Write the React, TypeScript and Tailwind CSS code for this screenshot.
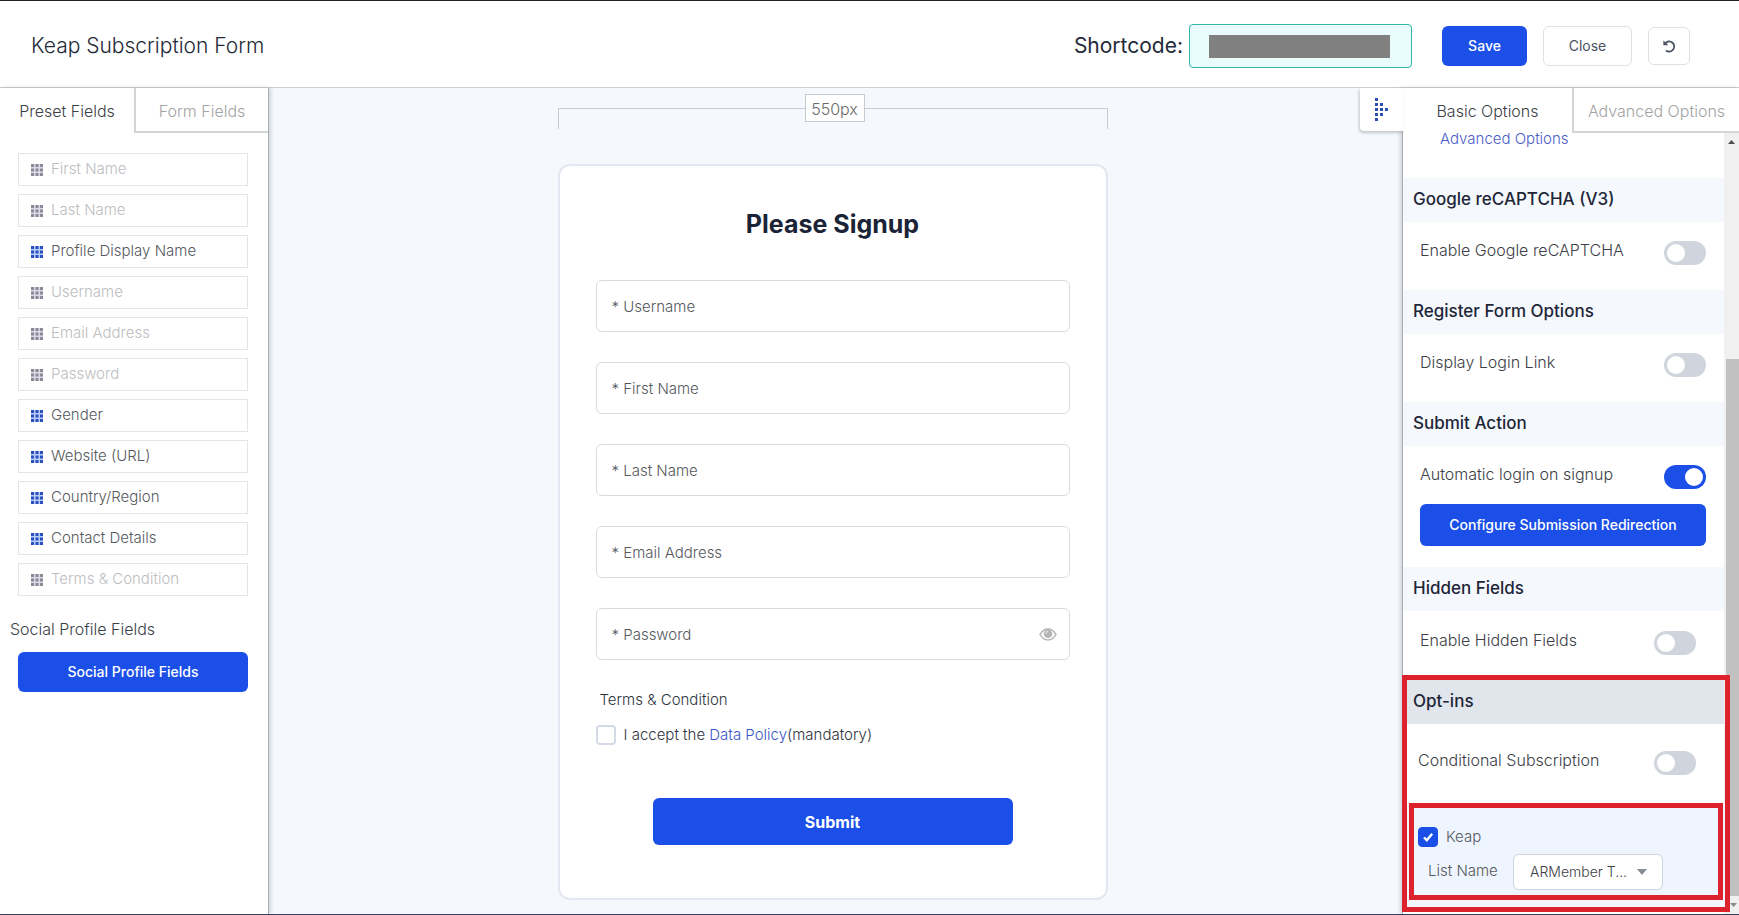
import React from "react";

const presetFields = [
  { label: "First Name", used: true },
  { label: "Last Name", used: true },
  { label: "Profile Display Name", used: false },
  { label: "Username", used: true },
  { label: "Email Address", used: true },
  { label: "Password", used: true },
  { label: "Gender", used: false },
  { label: "Website (URL)", used: false },
  { label: "Country/Region", used: false },
  { label: "Contact Details", used: false },
  { label: "Terms & Condition", used: true },
];

const formInputs = [
  { label: "* Username", type: "text" },
  { label: "* First Name", type: "text" },
  { label: "* Last Name", type: "text" },
  { label: "* Email Address", type: "email" },
];

function GridIcon({ active }: { active: boolean }) {
  const cells = [0, 4.5, 9];
  return (
    <svg viewBox="0 0 12 12" className="size-3 shrink-0" aria-hidden="true">
      <rect width="12" height="12" fill={active ? "#b9cdf7" : "#dcdae6"} />
      {cells.map((y) =>
        cells.map((x) => (
          <rect key={`${x}-${y}`} x={x} y={y} width="3" height="3" fill={active ? "#2a4fc0" : "#8b8996"} />
        )),
      )}
    </svg>
  );
}

function CollapseIcon() {
  const dots = [
    [0, 0],
    [0, 5], [5, 5],
    [0, 10], [5, 10], [10, 10],
    [0, 15], [5, 15],
    [0, 20],
  ];
  return (
    <svg viewBox="0 0 13 23" className="h-[23px] w-[13px]" aria-hidden="true">
      {dots.map(([x, y]) => (
        <rect key={`${x}-${y}`} x={x} y={y} width="3" height="3" fill="#2a4fb5" />
      ))}
    </svg>
  );
}

function UndoIcon() {
  return (
    <svg viewBox="0 0 13 13" className="size-[13px]" fill="none" aria-hidden="true">
      <path d="M2.5 3.1A5 5 0 1 1 3 10.4" stroke="#4a5160" strokeWidth="1.9" />
      <path d="M0.4 0.4V5.2H5.4Z" fill="#4a5160" />
    </svg>
  );
}

function EyeIcon() {
  return (
    <svg viewBox="0 0 18 13" className="h-[13px] w-[18px]" aria-hidden="true">
      <path
        d="M1 6.5C3 3 5.8 1 9 1s6 2 8 5.5C15 10 12.2 12 9 12S3 10 1 6.5Z"
        fill="none"
        stroke="#b5b5b5"
        strokeWidth="1.5"
      />
      <circle cx="9" cy="5.8" r="4.3" fill="#b5b5b5" />
      <path d="M6.8 5.6A2.2 2.2 0 0 1 9 3.4" fill="none" stroke="#fff" strokeWidth="0.8" />
    </svg>
  );
}

function Toggle({ id, on = false }: { id: string; on?: boolean }) {
  return (
    <input
      id={id}
      type="checkbox"
      role="switch"
      defaultChecked={on}
      className="h-6 w-[42px] shrink-0 appearance-none rounded-full bg-[#d0d4dc] p-[3px] before:block before:size-[18px] before:rounded-full before:bg-white checked:bg-[#1b4fe8] checked:before:ml-[18px]"
    />
  );
}

function SectionTitle({ children }: { children: React.ReactNode }) {
  return (
    <h2 className="flex h-11 items-center bg-[#f5f9fd] px-2.5 text-[17px] font-medium text-[#1f2638]">{children}</h2>
  );
}

function ToggleRow({ id, label, on }: { id: string; label: string; on?: boolean }) {
  return (
    <div className="flex h-6 items-center justify-between">
      <label htmlFor={id} className="pb-1.5 text-base leading-5">
        {label}
      </label>
      <Toggle id={id} on={on} />
    </div>
  );
}

export default function App() {
  return (
    <div className="flex min-h-screen flex-col border-t border-b border-t-[#1f1f24] border-b-[#3a4468] bg-white font-['Inter','Liberation_Sans',sans-serif] font-light text-[#3c4046]">
      <header className="flex h-[87px] items-center border-b border-[#cdcfd3] pt-1 pr-[49px] pl-[31px]">
        <h1 className="flex-1 text-[21px] text-[#242a38]">Keap Subscription Form</h1>
        <label htmlFor="shortcode" className="mr-1.5 text-[21px] font-normal text-[#242a38]">
          Shortcode:
        </label>
        <div className="mr-[30px] flex h-11 w-[223px] items-center rounded-sm border border-[#2eb8a9] bg-[#e9fbfa] px-[19px]">
          <output id="shortcode" className="h-[23px] w-[181px] bg-[#808080]" />
        </div>
        <button className="mr-4 h-10 w-[85px] rounded-md bg-[#1b4fe8] text-sm font-medium text-white">Save</button>
        <button className="mr-4 h-10 w-[89px] rounded-md border border-[#dde0e5] text-sm font-normal text-[#4a5160]">
          Close
        </button>
        <button
          aria-label="Reset"
          className="flex h-[38px] w-[42px] items-center justify-center rounded-md border border-[#dde0e5]"
        >
          <UndoIcon />
        </button>
      </header>

      <main className="flex flex-1">
        <aside className="z-10 w-[269px] shrink-0 border-r border-[#a9adb3] bg-white shadow-[2px_0_4px_rgba(0,0,0,0.15)]">
          <div className="flex h-[45px] text-base">
            <button className="w-[134px]">Preset Fields</button>
            <button className="flex-1 border-b-2 border-l-2 border-[#d3d4d6] pt-0.5 text-[#a3a3a3]">Form Fields</button>
          </div>
          <ul className="flex flex-col gap-2 pt-5 pr-5 pl-[18px] text-[15px]">
            {presetFields.map(({ label, used }) => (
              <li
                key={label}
                className={`flex h-[33px] items-center gap-2 border border-[#e4e5e7] pl-3 ${
                  used ? "text-[#bdbdbf]" : "text-[#55595e]"
                }`}
              >
                <GridIcon active={!used} />
                {label}
              </li>
            ))}
          </ul>
          <h2 className="mt-[21px] pl-2.5 text-base">Social Profile Fields</h2>
          <div className="pt-[11px] pr-5 pl-[18px]">
            <button className="h-10 w-full rounded-md bg-[#1b4fe8] text-sm font-medium text-white">
              Social Profile Fields
            </button>
          </div>
        </aside>

        <section className="flex flex-1 flex-col items-center bg-[#f5f9fe] pt-1.5 pr-1.5 pb-3.5">
          <div className="flex w-[550px] items-start">
            <div className="mt-3.5 h-[21px] w-[247px] border-t border-l border-[#c6ccd2]" />
            <div className="flex h-7 w-[60px] items-center justify-center border border-[#c6ccd2] bg-white pt-0.5 text-base text-[#6a6a68]">
              550px
            </div>
            <div className="mt-3.5 h-[21px] flex-1 border-t border-r border-[#c6ccd2]" />
          </div>
          <form
            onSubmit={(e) => e.preventDefault()}
            className="mt-[35px] flex w-[550px] flex-1 flex-col rounded-xl border-2 border-[#e3e7f2] bg-white px-9 pt-10 text-[15px]"
          >
            <h2 className="mb-[38px] text-center text-[25px] leading-9 font-bold text-[#1b2336]">Please Signup</h2>
            <div className="flex flex-col gap-[30px]">
              {formInputs.map(({ label, type }) => (
                <input
                  key={label}
                  type={type}
                  aria-label={label}
                  placeholder={label}
                  className="h-[52px] w-full rounded-md border border-[#d8dbdf] px-[15px] placeholder:text-[#55595e]"
                />
              ))}
              <div className="flex h-[52px] items-center rounded-md border border-[#d8dbdf] pr-3">
                <input
                  type="password"
                  aria-label="* Password"
                  placeholder="* Password"
                  className="h-full flex-1 rounded-md px-[15px] placeholder:text-[#55595e]"
                />
                <button type="button" aria-label="Show password">
                  <EyeIcon />
                </button>
              </div>
            </div>
            <p className="mt-[30px] pl-1 leading-5 text-[#2f3440]">Terms &amp; Condition</p>
            <div className="mt-[15px] flex h-5 items-center gap-2 text-[#2f3440]">
              <input
                id="accept"
                type="checkbox"
                className="size-5 appearance-none rounded-sm border-2 border-[#d5dbe6] checked:bg-[#1b4fe8]"
              />
              <label htmlFor="accept">
                I accept the{" "}
                <a href="#policy" className="text-[#3a55c8]">
                  Data Policy
                </a>
                (mandatory)
              </label>
            </div>
            <button className="mt-[53px] mb-[52px] h-[47px] w-[360px] self-center rounded-md bg-[#1b4fe8] text-base font-bold text-white">
              Submit
            </button>
          </form>
        </section>

        <aside className="relative flex w-[337px] shrink-0 flex-col border-l border-[#a9adb3] bg-white shadow-[-2px_0_4px_rgba(0,0,0,0.15)]">
          <button
            aria-label="Collapse panel"
            className="absolute top-0 right-full flex h-[43px] w-[43px] items-center justify-center rounded-bl-sm bg-white shadow-[-1px_2px_3px_rgba(0,0,0,0.2)]"
          >
            <CollapseIcon />
          </button>
          <div className="flex h-[45px] text-base">
            <button className="w-[169px]">Basic Options</button>
            <button className="flex-1 border-b-2 border-l-2 border-[#d3d4d6] pt-0.5 whitespace-nowrap text-[#a3a3a3]">
              Advanced Options
            </button>
          </div>
          <div className="flex flex-1">
            <div className="flex-1">
              <a href="#advanced" className="block h-[45px] pl-[37px] text-[15px] leading-3 text-[#4a5cc8]">
                Advanced Options
              </a>

              <SectionTitle>Google reCAPTCHA (V3)</SectionTitle>
              <div className="pt-[19px] pr-[18px] pb-[25px] pl-[17px]">
                <ToggleRow id="recaptcha" label="Enable Google reCAPTCHA" />
              </div>

              <SectionTitle>Register Form Options</SectionTitle>
              <div className="pt-[19px] pr-[18px] pb-[25px] pl-[17px]">
                <ToggleRow id="login-link" label="Display Login Link" />
              </div>

              <SectionTitle>Submit Action</SectionTitle>
              <div className="pt-[19px] pr-[18px] pb-[21px] pl-[17px]">
                <ToggleRow id="auto-login" label="Automatic login on signup" on />
                <button className="mt-[15px] h-[42px] w-full rounded-md bg-[#1b4fe8] text-sm font-medium text-white">
                  Configure Submission Redirection
                </button>
              </div>

              <SectionTitle>Hidden Fields</SectionTitle>
              <div className="py-5 pr-7 pl-[17px]">
                <ToggleRow id="hidden-fields" label="Enable Hidden Fields" />
              </div>

              <section className="relative">
                <div className="pointer-events-none absolute inset-y-0 -right-1.5 -left-px z-10 border-[5px] border-[#dd222e]" />
                <h2 className="flex h-[49px] items-center bg-[#e1e6ed] px-2.5 pt-1 text-[17px] font-medium text-[#1f2638]">
                  Opt-ins
                </h2>
                <div className="pt-[27px] pr-7 pb-7 pl-[15px]">
                  <ToggleRow id="conditional" label="Conditional Subscription" />
                </div>
                <div className="bg-[#f3f7fd] pr-px pb-3 pl-1.5">
                  <div className="flex h-[97px] flex-col border-[5px] border-[#dd222e] bg-[#eff5fe] pt-[19px] pl-1 text-[15px]">
                    <div className="flex h-5 items-center gap-2">
                      <span className="grid size-5">
                        <input
                          id="keap"
                          type="checkbox"
                          defaultChecked
                          className="peer col-start-1 row-start-1 appearance-none rounded-sm border border-[#1b4fe8] checked:bg-[#1b4fe8]"
                        />
                        <svg
                          viewBox="0 0 20 20"
                          className="pointer-events-none invisible col-start-1 row-start-1 peer-checked:visible"
                          aria-hidden="true"
                        >
                          <path d="M6 10.5 8.8 13.2 14.2 6.8" fill="none" stroke="#fff" strokeWidth="2.4" />
                        </svg>
                      </span>
                      <label htmlFor="keap" className="text-[#55595e]">
                        Keap
                      </label>
                    </div>
                    <div className="mt-[7px] flex items-center pl-2.5">
                      <label htmlFor="list-name" className="w-[85px] pb-0.5 text-[#55595e]">
                        List Name
                      </label>
                      <div className="grid h-9 w-[150px] items-center">
                        <select
                          id="list-name"
                          className="col-start-1 row-start-1 h-full w-full appearance-none rounded-md border border-[#cfd4dc] bg-white pl-4 text-sm text-[#3c4046]"
                        >
                          <option>ARMember T...</option>
                        </select>
                        <svg
                          viewBox="0 0 10 6"
                          className="pointer-events-none col-start-1 row-start-1 mr-4 h-1.5 w-2.5 justify-self-end"
                          aria-hidden="true"
                        >
                          <path d="M0 0H10L5 6Z" fill="#868b96" />
                        </svg>
                      </div>
                    </div>
                  </div>
                </div>
              </section>
            </div>
            <div className="flex w-[15px] flex-col items-center bg-[#f0f0f0]" aria-hidden="true">
              <svg viewBox="0 0 7 4" className="mt-[7px] h-1 w-[7px]">
                <path d="M0 4H7L3.5 0Z" fill="#505050" />
              </svg>
              <div className="mt-[215px] ml-0.5 w-[13px] flex-1 bg-[#c1c1c1]" />
              <svg viewBox="0 0 7 4" className="my-[7px] ml-1 h-1 w-[7px]">
                <path d="M0 0H7L3.5 4Z" fill="#8a8a8a" />
              </svg>
            </div>
          </div>
        </aside>
      </main>
    </div>
  );
}
